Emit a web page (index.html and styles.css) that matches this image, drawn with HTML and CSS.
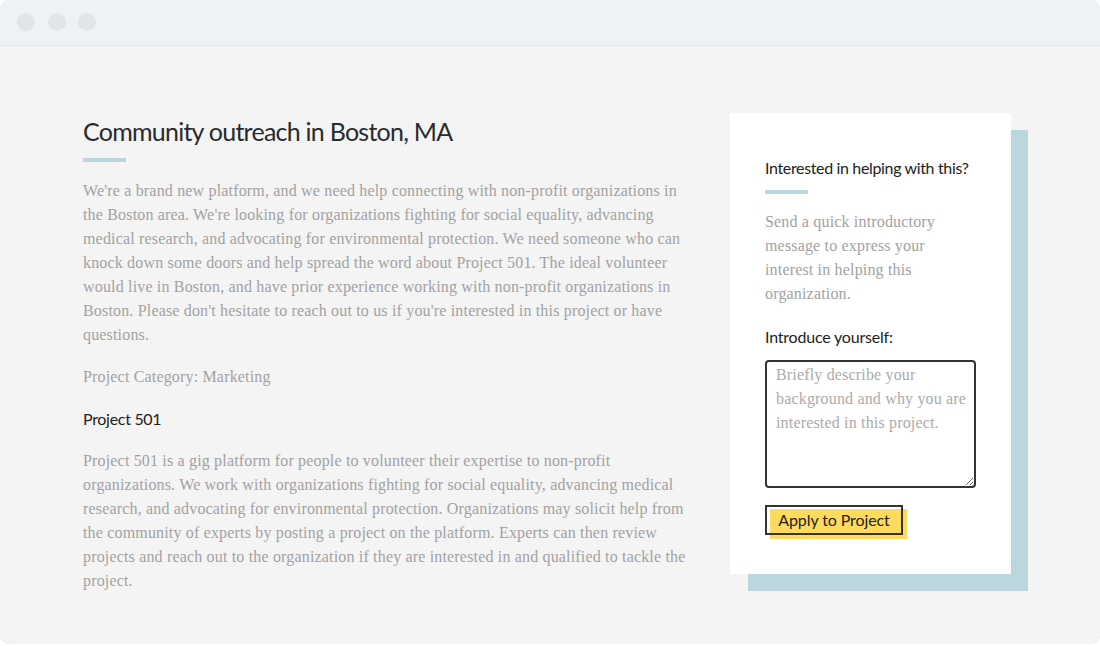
FILE: index.html
```html
<!DOCTYPE html>
<html lang="en">
<head>
<meta charset="utf-8">
<title>Community outreach in Boston, MA</title>
<link rel="stylesheet" href="styles.css">
</head>
<body>
<div class="window">
  <div class="titlebar">
    <span class="dot"></span><span class="dot"></span><span class="dot"></span>
  </div>
  <div class="content">
    <main class="details">
      <h1 class="title">Community outreach in Boston, MA</h1>
      <div class="bar"></div>
      <p class="text">We're a brand new platform, and we need help connecting with non-profit organizations in the Boston area. We're looking for organizations fighting for social equality, advancing medical research, and advocating for environmental protection. We need someone who can knock down some doors and help spread the word about Project 501. The ideal volunteer would live in Boston, and have prior experience working with non-profit organizations in Boston. Please don't hesitate to reach out to us if you're interested in this project or have questions.</p>
      <p class="text category">Project Category: Marketing</p>
      <h2 class="subtitle">Project 501</h2>
      <p class="text about">Project 501 is a gig platform for people to volunteer their expertise to non-profit organizations. We work with organizations fighting for social equality, advancing medical research, and advocating for environmental protection. Organizations may solicit help from the community of experts by posting a project on the platform. Experts can then review projects and reach out to the organization if they are interested in and qualified to tackle the project.</p>
    </main>
    <aside class="card-wrap">
      <div class="card">
        <h3 class="card-title">Interested in helping with this?</h3>
        <div class="bar bar-card"></div>
        <p class="text card-text">Send a quick introductory message to express your interest in helping this organization.</p>
        <label class="label" for="intro">Introduce yourself:</label>
        <textarea id="intro" class="intro" placeholder="Briefly describe your background and why you are interested in this project."></textarea>
        <button class="apply" type="button">Apply to Project</button>
      </div>
    </aside>
  </div>
</div>
</body>
</html>
```

FILE: styles.css
```css
* { box-sizing: border-box; }
html, body { margin: 0; padding: 0; background: #ffffff; }
body { width: 1100px; height: 646px; overflow: hidden; }

.window {
  width: 1100px;
  height: 644px;
  border-radius: 10px;
  background: #f4f4f4;
  overflow: hidden;
  box-shadow: 0 0 1px rgba(0,0,0,0.18);
  display: flex;
  flex-direction: column;
}

.titlebar {
  height: 46px;
  flex: 0 0 46px;
  background: #eff2f5;
  border-bottom: 1px solid #e0e5e9;
  display: flex;
  align-items: center;
  gap: 12.6px;
  padding-left: 17px;
  padding-bottom: 1px;
}
.dot {
  width: 18px;
  height: 18px;
  border-radius: 50%;
  background: #e1e5e8;
}

.content {
  display: flex;
  align-items: flex-start;
  padding: 67px 0 0 83px;
  gap: 37px;
}

.details { width: 610px; padding-top: 2px; }

.title {
  margin: 0;
  font-family: "Lato", "Noto Sans", sans-serif;
  font-weight: 400;
  font-size: 25px;
  line-height: 32px;
  color: #2b2b2b;
  letter-spacing: -0.75px;
}

.bar {
  width: 43px;
  height: 4px;
  background: #bcd6de;
  margin-top: 11px;
}

.text {
  font-family: "Liberation Serif", "Times New Roman", serif;
  font-size: 16px;
  line-height: 24px;
  letter-spacing: 0.17px;
  color: #a2a2a2;
  margin: 17px 0 0;
}
.details .category { margin-top: 18px; }
.details .about { margin-top: 18px; }

.subtitle {
  margin: 18px 0 0;
  font-family: "Lato", "Noto Sans", sans-serif;
  font-weight: 400;
  font-size: 16px;
  line-height: 24px;
  color: #222222;
  letter-spacing: -0.3px;
}

.card-wrap {
  position: relative;
  width: 281px;
}
.card-wrap::before {
  content: "";
  position: absolute;
  left: 18px;
  top: 17px;
  right: -17px;
  bottom: -17px;
  background: #bcd6de;
}
.card {
  position: relative;
  background: #ffffff;
  padding: 43px 35px 39px;
  display: flex;
  flex-direction: column;
  align-items: flex-start;
}

.card-title {
  margin: 0;
  font-family: "Lato", "Noto Sans", sans-serif;
  font-weight: 400;
  font-size: 16px;
  line-height: 24px;
  color: #222222;
  letter-spacing: -0.35px;
  white-space: nowrap;
}
.bar-card { margin-top: 10px; }

.card-text { margin-top: 16px; }

.label {
  margin-top: 19px;
  font-family: "Lato", "Noto Sans", sans-serif;
  font-size: 16px;
  line-height: 24px;
  color: #222222;
  letter-spacing: -0.2px;
}

.intro {
  margin-top: 11px;
  width: 211px;
  height: 128px;
  border: 2px solid #333333;
  border-radius: 4px;
  padding: 1px 3px 1px 9px;
  font-family: "Liberation Serif", "Times New Roman", serif;
  font-size: 16px;
  line-height: 24px;
  letter-spacing: 0.17px;
  color: #444;
  background: #ffffff;
  resize: vertical;
  outline: none;
}
.intro::placeholder { color: #ababab; opacity: 1; }

.apply {
  position: relative;
  z-index: 0;
  margin-top: 17px;
  height: 30px;
  width: 138px;
  padding: 0;
  border: 0;
  border-radius: 0;
  background: transparent;
  font-family: "Lato", "Noto Sans", sans-serif;
  font-size: 16px;
  line-height: 30px;
  letter-spacing: -0.1px;
  color: #222222;
  cursor: pointer;
}
.apply::before {
  content: "";
  position: absolute;
  z-index: -2;
  left: 5px;
  top: 4px;
  width: 137px;
  height: 30px;
  background: #fedb5d;
}
.apply::after {
  content: "";
  position: absolute;
  z-index: -1;
  inset: 0;
  border: 2px solid #333333;
}
```
